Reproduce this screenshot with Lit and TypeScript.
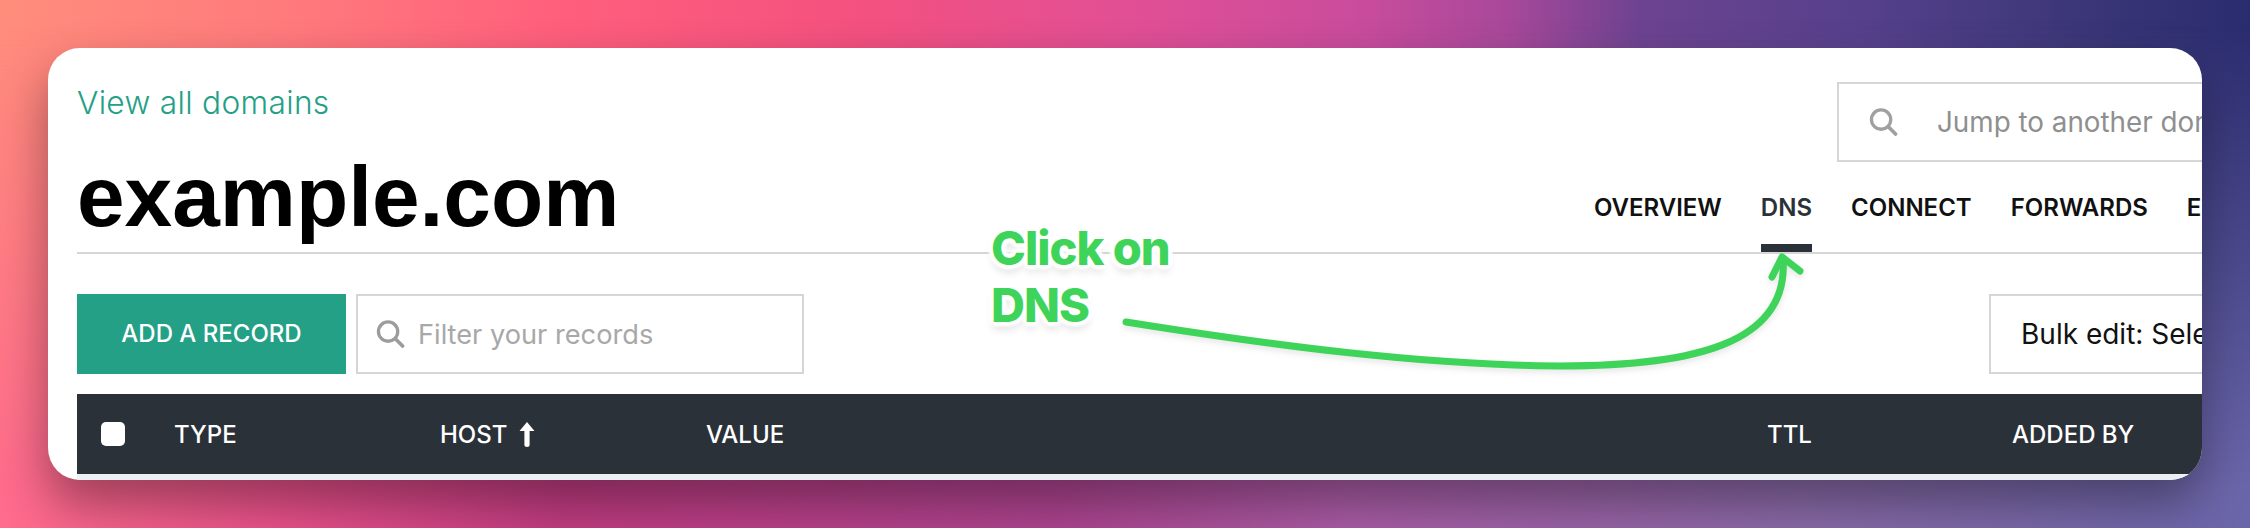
import { LitElement, html, css, svg } from "lit";
import { customElement } from "lit/decorators.js";

const searchIcon = svg`<circle cx="12" cy="12" r="10" fill="none" stroke="currentColor" stroke-width="3.4"/><path d="M19.5 19.5l7.5 7.5" fill="none" stroke="currentColor" stroke-width="3.8" stroke-linecap="round"/>`;

@customElement("app-root")
export class AppRoot extends LitElement {
  static styles = css`
    :host {
      display: block;
      width: 2250px;
      height: 528px;
      overflow: hidden;
      font-family: Inter, "Liberation Sans", sans-serif;
    }
    .stage {
      position: relative;
      box-sizing: border-box;
      width: 2250px;
      height: 528px;
      padding: 48px;
      background: linear-gradient(90deg, #ff8d7c 0%, #ff7a7c 13%, #ff5f7c 25%, #f4517f 38%, #e04f96 51%, #c94c9c 60.5%, #a8489a 67%, #6c4390 73%, #55408c 83%, #3c3778 92%, #2a2c70 100%);
    }
    .stage::before {
      content: "";
      position: absolute;
      inset: 0;
      background: linear-gradient(90deg, #ff6c8c 0%, #e8508a 13%, #c23c82 25%, #ae4490 47%, #aa5ca6 60%, #8a6aa8 80%, #6a66aa 100%);
      -webkit-mask-image: linear-gradient(to bottom, transparent 5%, black 92%);
      mask-image: linear-gradient(to bottom, transparent 5%, black 92%);
    }
    .card {
      position: relative;
      box-sizing: border-box;
      width: 2154px;
      height: 432px;
      background: #fff;
      border-radius: 32px;
      overflow: hidden;
      padding-left: 29px;
      box-shadow: 0 24px 48px rgba(0, 0, 0, 0.36);
    }
    .head {
      display: grid;
      grid-template-columns: 1517px 1fr;
      height: 206px;
      box-sizing: border-box;
      border-bottom: 2px solid #d6d6d6;
    }
    .left {
      display: flex;
      flex-direction: column;
      min-width: 0;
    }
    .link {
      margin-top: 35px;
      font-size: 31.7px;
      line-height: 40px;
      color: #24a086;
      letter-spacing: 0.3px;
      font-weight: 300;
    }
    .title {
      margin: 25px 0 0;
      font-family: "Liberation Sans", Arial, sans-serif;
      font-weight: 700;
      font-size: 85.6px;
      line-height: 98px;
      color: #000;
      white-space: nowrap;
    }
    .right {
      display: flex;
      flex-direction: column;
      min-width: 0;
    }
    .jump {
      box-sizing: border-box;
      display: flex;
      align-items: center;
      flex: none;
      width: 500px;
      height: 80px;
      margin: 34px 0 0 243px;
      border: 2px solid #d6d6d6;
      padding-left: 29px;
      color: #8f8f8f;
      font-size: 27.8px;
      white-space: nowrap;
    }
    .jump svg {
      width: 31px;
      height: 28px;
      color: #a0a0a0;
      flex: none;
      margin-right: 38px;
    }
    .nav {
      display: flex;
      margin-top: 31px;
      gap: 39px;
      white-space: nowrap;
      font-size: 24px;
      font-weight: 600;
      color: #111;
      line-height: 30px;
    }
    .nav span {
      padding-bottom: 21px;
      border-bottom: 8px solid transparent;
    }
    .nav .on {
      color: #2b3138;
      border-bottom-color: #2b3138;
    }
    .tools {
      display: flex;
      margin-top: 40px;
      height: 80px;
    }
    .add {
      flex: none;
      width: 269px;
      display: flex;
      align-items: center;
      justify-content: center;
      background: #24a086;
      color: #fff;
      font-size: 24px;
      font-weight: 500;
      white-space: nowrap;
      padding-bottom: 2px;
      box-sizing: border-box;
    }
    .filter {
      box-sizing: border-box;
      flex: none;
      width: 448px;
      margin-left: 10px;
      display: flex;
      align-items: center;
      border: 2px solid #d6d6d6;
      padding-left: 18px;
      color: #a8a8a8;
      font-size: 27.2px;
      white-space: nowrap;
    }
    .filter svg {
      width: 29px;
      height: 28px;
      color: #9c9c9c;
      flex: none;
      margin-right: 13px;
    }
    .bulk {
      box-sizing: border-box;
      flex: none;
      width: 500px;
      margin-left: 1185px;
      display: flex;
      align-items: center;
      border: 2px solid #d6d6d6;
      padding-left: 30px;
      color: #111;
      font-size: 28px;
      white-space: nowrap;
    }
    .thead {
      display: grid;
      grid-template-columns: 97px 266px 266px 1061px 245px 1fr;
      align-items: center;
      margin-top: 20px;
      height: 80px;
      box-sizing: border-box;
      background: #2b3138;
      color: #fff;
      font-size: 24px;
      font-weight: 500;
      white-space: nowrap;
    }
    .strip {
      height: 6px;
      background: #edf0f2;
    }
    .check {
      display: block;
      width: 24px;
      height: 24px;
      margin-left: 24px;
      background: #fff;
      border-radius: 5px;
    }
    .host {
      display: flex;
      align-items: center;
      gap: 11px;
    }
    .host svg {
      width: 18px;
      height: 25px;
      flex: none;
    }
    .note {
      position: absolute;
      left: 991px;
      top: 219px;
      margin: 0;
      font-size: 47px;
      line-height: 57px;
      font-weight: 800;
      color: #3ed45a;
      letter-spacing: -1px;
      text-shadow:
        0 0 3px #fff, 4px 0 3px #fff, -4px 0 3px #fff, 0 4px 3px #fff, 0 -4px 3px #fff,
        3px 3px 3px #fff, -3px 3px 3px #fff, 3px -3px 3px #fff, -3px -3px 3px #fff,
        0 7px 9px rgba(0, 0, 0, 0.14);
    }
    .arrow {
      position: absolute;
      left: 1100px;
      top: 240px;
      width: 720px;
      height: 140px;
      overflow: visible;
      filter: drop-shadow(0 3px 3px rgba(0, 0, 0, 0.1));
    }
  `;

  render() {
    return html`
      <div class="stage">
        <div class="card">
          <div class="head">
            <div class="left">
              <div class="link">View all domains</div>
              <h1 class="title">example.com</h1>
            </div>
            <div class="right">
              <div class="jump">
                <svg viewBox="0 0 29 29">${searchIcon}</svg>
                <span>Jump to another domain</span>
              </div>
              <div class="nav">
                <span>OVERVIEW</span>
                <span class="on">DNS</span>
                <span>CONNECT</span>
                <span>FORWARDS</span>
                <span>EMAIL</span>
              </div>
            </div>
          </div>
          <div class="tools">
            <div class="add">ADD A RECORD</div>
            <div class="filter">
              <svg viewBox="0 0 29 29">${searchIcon}</svg>
              <span>Filter your records</span>
            </div>
            <div class="bulk">Bulk edit: Select records</div>
          </div>
          <div class="thead">
            <span class="check"></span>
            <span>TYPE</span>
            <span class="host">HOST
              <svg viewBox="0 0 18 25"><path d="M9 0L16.5 9H11.6V23.2a2.6 1.8 0 0 1-5.2 0V9H1.5z" fill="#fff"/></svg>
            </span>
            <span>VALUE</span>
            <span>TTL</span>
            <span>ADDED BY</span>
          </div>
          <div class="strip"></div>
        </div>
        <p class="note">Click on<br />DNS</p>
        <svg class="arrow" viewBox="1100 240 720 140" fill="none" stroke="#3ed45a" stroke-linecap="round" stroke-linejoin="round">
          <path d="M1126 322C1270 345 1420 365 1560 366C1690 366 1790 345 1783 258" stroke-width="7"/>
          <path d="M1772 277L1782 257L1800 271" stroke-width="7"/>
        </svg>
      </div>
    `;
  }
}
